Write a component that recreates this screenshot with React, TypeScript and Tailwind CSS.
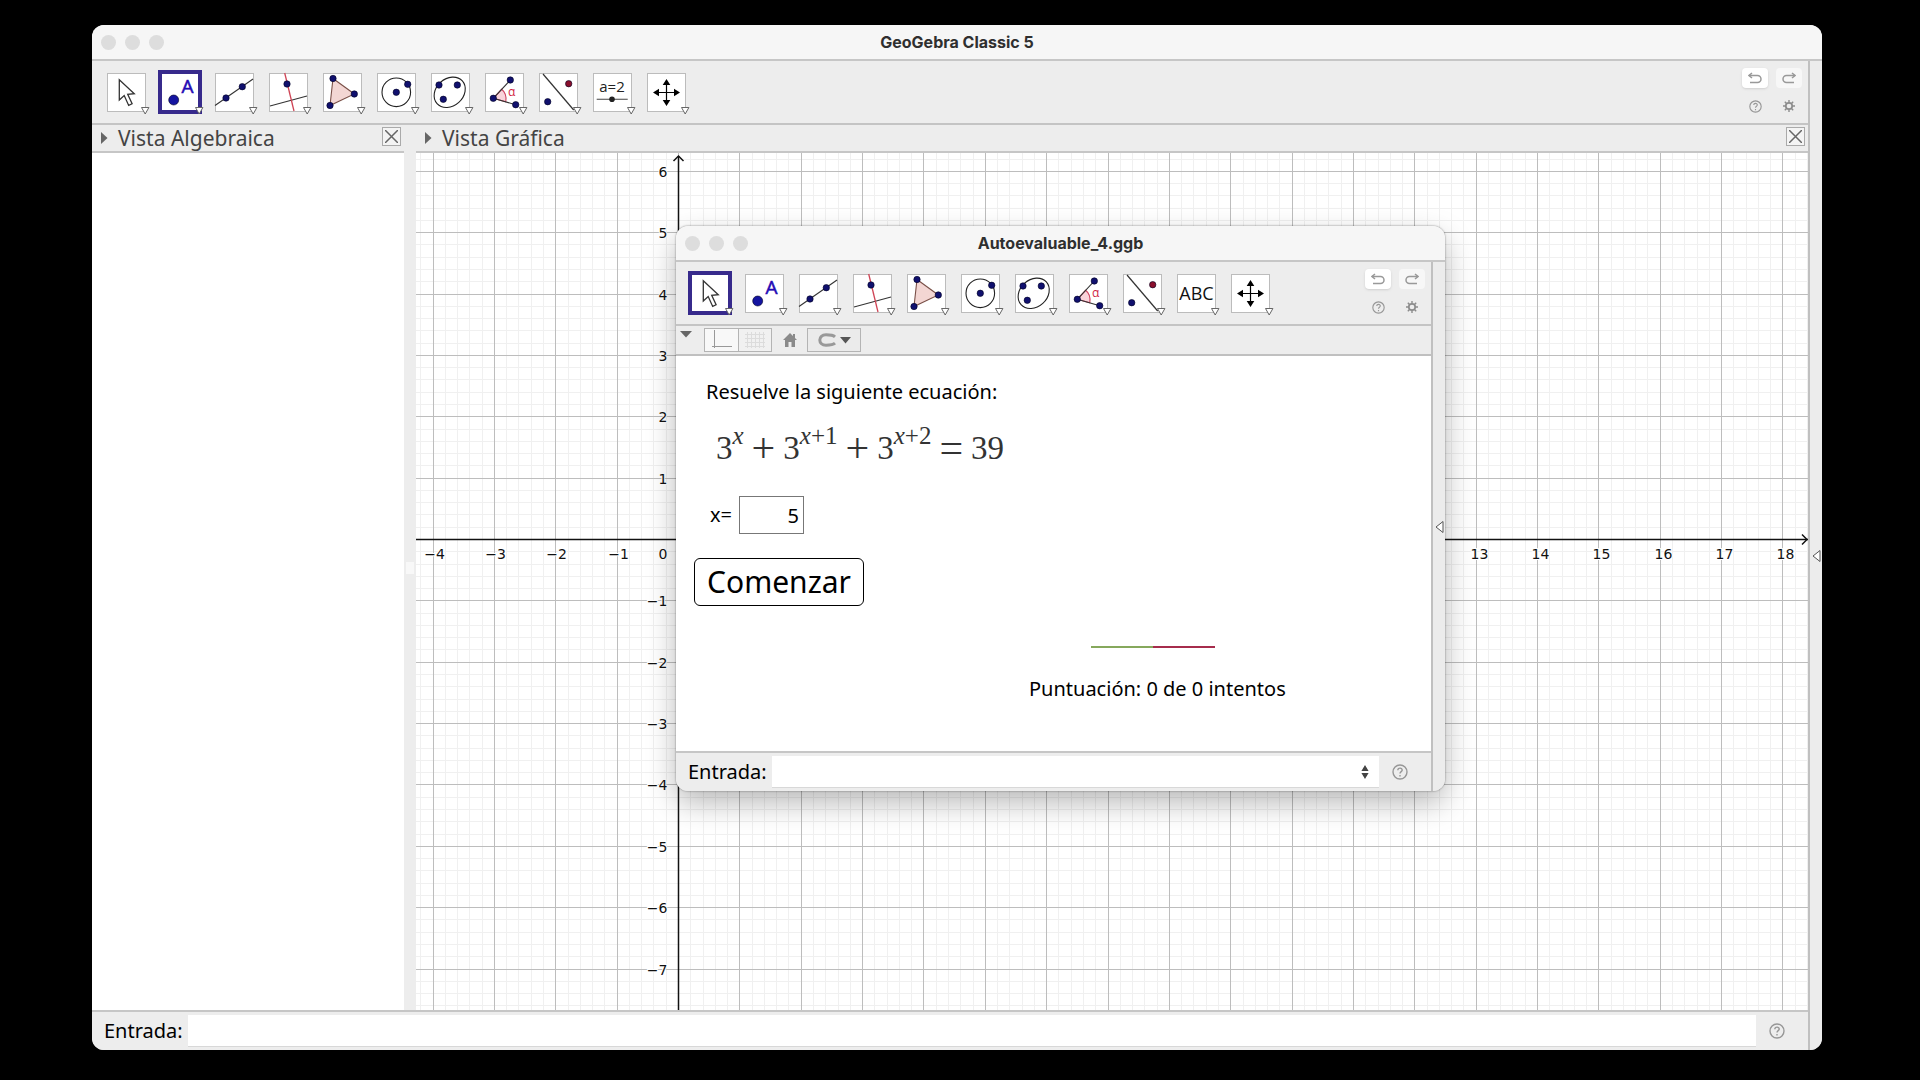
import type { ReactNode } from "react";

const UNIT = 61.36;
const ORIGIN_X = 262;
const ORIGIN_Y = 386;
const NAVY = "#10106e";

const range = (from: number, to: number) =>
  Array.from({ length: to - from + 1 }, (_, i) => from + i);

const label = (v: number) => String(v).replace("-", "−");

function Dot({ x, y, r = 3.2, fill = NAVY }: { x: number; y: number; r?: number; fill?: string }) {
  return <circle cx={x} cy={y} r={r} fill={fill} stroke="#000022" strokeWidth="0.6" />;
}

const toolIcons: Record<string, ReactNode> = {
  Mueve: (
    <path
      d="M12.3 6.7V27l4.9-4.4 4.5 9.8 3.4-1.6-4.4-9.4 6.6-.7z"
      fill="#fff"
      stroke="#333"
      strokeWidth="1.3"
    />
  ),
  Punto: (
    <>
      <Dot x={12.7} y={27} r={5} fill="#1414a0" />
      <text x="26.5" y="19.5" textAnchor="middle" fontSize="19" fill="#2409b5" stroke="#2409b5" strokeWidth="0.5">
        A
      </text>
    </>
  ),
  Recta: (
    <>
      <path d="M0 32.5 38 6" stroke="#333" strokeWidth="1.1" />
      <Dot x={11} y={25} />
      <Dot x={27.3} y={13.7} />
    </>
  ),
  Perpendicular: (
    <>
      <path d="M1 33 38 23" stroke="#333" strokeWidth="1.1" />
      <path d="m15.7 0 9.3 38" stroke="#cf4455" strokeWidth="1.3" />
      <Dot x={18} y={11} />
    </>
  ),
  Polígono: (
    <>
      <path d="M10 5.5 31.3 21 7 32.5z" fill="#f3d6d3" stroke="#7a5048" strokeWidth="1.1" />
      <Dot x={10} y={5.5} />
      <Dot x={31.3} y={21} />
      <Dot x={7} y={32.5} />
    </>
  ),
  Circunferencia: (
    <>
      <circle cx="19.3" cy="19.3" r="14.3" fill="none" stroke="#222" strokeWidth="1.1" />
      <Dot x={19.3} y={19.3} />
      <Dot x={30.7} y={11.3} />
    </>
  ),
  Elipse: (
    <>
      <ellipse
        cx="18.7"
        cy="19.3"
        rx="17"
        ry="13.6"
        transform="rotate(-42 18.7 19.3)"
        fill="none"
        stroke="#222"
        strokeWidth="1.1"
      />
      <Dot x={8} y={12} />
      <Dot x={26.3} y={12} />
      <Dot x={12.3} y={26.3} />
    </>
  ),
  Ángulo: (
    <>
      <path d="M8.3 25.3 16.6 16.3Q22 20.5 20.8 28.8z" fill="#f9d3da" stroke="#cf4461" strokeWidth="1.1" />
      <path d="M25.3 7 8.3 25.3l22.4 6.4" fill="none" stroke="#333" strokeWidth="1.1" />
      <Dot x={8.3} y={25.3} />
      <Dot x={25.3} y={7} />
      <Dot x={30.7} y={31.7} />
      <text x="26.7" y="23" textAnchor="middle" fontSize="12" fill="#d12344">
        α
      </text>
    </>
  ),
  Simetría: (
    <>
      <path d="m4 1 30.7 36" stroke="#333" strokeWidth="1.2" />
      <Dot x={29.7} y={10.7} fill="#8a0f2c" />
      <Dot x={8.7} y={28.7} />
    </>
  ),
  Deslizador: (
    <>
      <text x="19" y="18.5" textAnchor="middle" fontSize="15" fill="#222">
        a=2
      </text>
      <path d="M3.7 26.3h31" stroke="#444" strokeWidth="1.1" />
      <circle cx="19" cy="26.3" r="2.8" fill="#222" />
    </>
  ),
  Texto: (
    <text x="19.500" y="26" textAnchor="middle" fontSize="18" fill="#111">
      ABC
    </text>
  ),
  "Desplaza Vista Gráfica": (
    <>
      <path d="M19.5 10v19M10 19.5h19" stroke="#000" strokeWidth="1.2" />
      <path
        d="M19.5 6 23.3 12h-7.6zM19.5 33l3.8-6h-7.6zM6 19.5l6-3.8v7.6zM33 19.5l-6-3.8v7.6z"
        fill="#000"
      />
    </>
  ),
};

function ToolButton({ name, selected }: { name: string; selected: boolean }) {
  return (
    <button type="button" aria-label={name} className="flex w-[54px] justify-center">
      <svg width="44" height="44" overflow="visible" fontFamily="'Open Sans','Noto Sans',sans-serif">
        {selected ? (
          <rect x="2" y="2" width="40" height="40" fill="#fff" stroke="#372a8c" strokeWidth="4" />
        ) : (
          <rect x="3.5" y="3.5" width="38" height="38" fill="#fff" stroke="#bcbcbc" />
        )}
        <g transform="translate(3 3)">{toolIcons[name]}</g>
        <path d="M37.500 37.500h7.400L41.200 44z" fill="#fff" stroke="#666" />
      </svg>
    </button>
  );
}

function UndoIcon() {
  return (
    <svg width="14" height="12" viewBox="0 0 14 12" fill="none" stroke="#999" strokeWidth="1.5">
      <path d="M1 3.5h8.500a3.400 3.400 0 0 1 0 7H2" />
      <path d="M4 1 1 3.500 4 6" />
    </svg>
  );
}

function HelpIcon({ size }: { size: number }) {
  return (
    <svg width={size} height={size} viewBox="0 0 16 16" fill="none" stroke="#979797" strokeWidth="1.4">
      <circle cx="8" cy="8" r="7" />
      <path d="M5.800 6.200C6 3.400 10.400 3.600 10.200 6.200 10 7.800 8 7.600 8 9.600M8 11v1.500" />
    </svg>
  );
}

function GearIcon() {
  return (
    <svg width="12" height="12" viewBox="0 0 12 12" fill="none" stroke="#8c8c8c">
      <circle cx="6" cy="6" r="3.2" strokeWidth="1.7" />
      <path
        d="M6 0v2.500M6 9.500v2.500M0 6h2.500M9.500 6H12M1.800 1.800l1.700 1.700M8.500 8.500l1.700 1.700M10.200 1.800 8.500 3.500M3.500 8.500l-1.700 1.700"
        strokeWidth="1.4"
      />
    </svg>
  );
}

function Toolbar({ tools, selected }: { tools: string[]; selected: string }) {
  return (
    <div className="flex h-16 shrink-0 items-center justify-between border-b-2 border-[#c4c4c4] bg-[#ededed] pr-[6px] pl-[7px]">
      <div className="flex">
        {tools.map((t) => (
          <ToolButton key={t} name={t} selected={t === selected} />
        ))}
      </div>
      <div className="grid grid-cols-2 gap-x-2 gap-y-2">
        <button type="button" aria-label="Deshacer" className="flex h-5 w-[26px] items-center justify-center rounded bg-white shadow-sm">
          <UndoIcon />
        </button>
        <button type="button" aria-label="Rehacer" className="flex h-5 w-[26px] -scale-x-100 items-center justify-center rounded bg-[#f7f7f7]">
          <UndoIcon />
        </button>
        <button type="button" aria-label="Ayuda" className="flex h-5 items-center justify-center">
          <HelpIcon size={13} />
        </button>
        <button type="button" aria-label="Preferencias" className="flex h-5 items-center justify-center">
          <GearIcon />
        </button>
      </div>
    </div>
  );
}

function TitleBar({ title }: { title: string }) {
  return (
    <header className="grid h-9 shrink-0 grid-cols-[1fr_auto_1fr] items-center border-b-2 border-[#c6c6c6] bg-[#f6f6f6] px-[9px]">
      <div className="flex gap-[9px]">
        {["Cerrar", "Minimizar", "Ampliar"].map((n) => (
          <button key={n} type="button" aria-label={n} className="size-[15px] rounded-full bg-[#dddddd]" />
        ))}
      </div>
      <h1 className="font-[Inter,sans-serif] text-base leading-5 font-bold text-[#2f2f2f]">{title}</h1>
    </header>
  );
}

function SideStrip() {
  return (
    <button
      type="button"
      aria-label="Mostrar barra lateral"
      className="flex w-[14px] shrink-0 items-center justify-center border-l-2 border-[#c0c0c0] bg-[#ececec]"
    >
      <svg width="9" height="14" viewBox="0 0 9 14">
        <path d="M8 1.500V12.500L1 7z" fill="#fff" stroke="#555" />
      </svg>
    </button>
  );
}

function PanelHeader({ title }: { title: string }) {
  return (
    <div className="flex h-7 shrink-0 items-center justify-between border-b-2 border-[#c6c6c6] bg-[#ededed] pr-[3px] pl-[9px]">
      <div className="flex items-center gap-[10px]">
        <svg width="7" height="12" viewBox="0 0 7 12">
          <path d="M0 0v12l6.500-6z" fill="#666" />
        </svg>
        <h2 className="text-[21px] leading-6 text-[#444]">{title}</h2>
      </div>
      <button type="button" aria-label={`Cerrar ${title}`} className="mb-1 flex size-[19px] items-center justify-center border border-[#aaa] bg-[#f4f4f4]">
        <svg width="13" height="13" viewBox="0 0 13 13" stroke="#666" strokeWidth="1.5">
          <path d="m0 0 13 13M13 0 0 13" />
        </svg>
      </button>
    </div>
  );
}

function InputBar({ id, stepper }: { id: string; stepper?: boolean }) {
  return (
    <div className="flex h-10 shrink-0 items-center border-t-2 border-[#c6c6c6] bg-[#ededed] pl-3">
      <label htmlFor={id} className="w-[84px] text-xl leading-6 text-black">
        Entrada:
      </label>
      <div className="flex h-8 min-w-0 flex-1 items-center border-b border-[#d8d8d8] bg-white pr-[10px]">
        <input id={id} type="text" className="h-full min-w-0 flex-1 px-1 text-xl outline-none" />
        {stepper && (
          <button type="button" aria-label="Historial">
            <svg width="8" height="14" viewBox="0 0 8 14" fill="#444">
              <path d="M4 0l3.600 6H.4zM4 14l3.600-6H.4z" />
            </svg>
          </button>
        )}
      </div>
      <button type="button" aria-label="Ayuda de entrada" className="flex w-[52px] justify-start pl-[13px]">
        <HelpIcon size={16} />
      </button>
    </div>
  );
}

function CoordinatePlane() {
  const px = (v: number) => Math.round(ORIGIN_X + v * UNIT) + 0.5;
  const py = (v: number) => Math.round(ORIGIN_Y - v * UNIT) + 0.5;
  return (
    <div className="min-h-0 flex-1 overflow-hidden bg-white">
      <svg width="100%" height="100%" className="block" fontFamily="'DejaVu Sans',sans-serif" fontSize="14">
        <g stroke="#f0f0f0">
          {range(-25, 200).map((i) => (
            <line key={i} x1={px(i / 5)} x2={px(i / 5)} y1="0" y2="100%" />
          ))}
          {range(-100, 35).map((i) => (
            <line key={i} y1={py(i / 5)} y2={py(i / 5)} x1="0" x2="100%" />
          ))}
        </g>
        <g stroke="#bdbdbd">
          {range(-5, 40).map((i) => (
            <line key={i} x1={px(i)} x2={px(i)} y1="0" y2="100%" />
          ))}
          {range(-20, 7).map((i) => (
            <line key={i} y1={py(i)} y2={py(i)} x1="0" x2="100%" />
          ))}
        </g>
        <g stroke="#111" strokeWidth="1.5" fill="none">
          <line x1={px(0)} x2={px(0)} y1="3" y2="100%" />
          <path d={`M${px(0) - 5} 8 ${px(0)} 3l5 5`} />
          <line x1="0" x2="100%" y1={py(0)} y2={py(0)} />
          <svg x="100%" y={py(0)} overflow="visible">
            <path d="M-6-5-1 0l-5 5" />
          </svg>
        </g>
        <g fill="#111" stroke="#fff" strokeWidth="2" paintOrder="stroke">
          {range(-4, 18)
            .filter((i) => i < 0 || i > 12)
            .map((i) => (
              <text key={i} x={px(i) + (i < 0 ? 1 : 3)} y={py(0) + 19} textAnchor="middle">
                {label(i)}
              </text>
            ))}
          <text x={px(0) - 11} y={py(0) + 19} textAnchor="end">
            0
          </text>
          {range(-7, 6)
            .filter((i) => i !== 0)
            .map((i) => (
              <text key={i} x={px(0) - 11} y={py(i) + 5} textAnchor="end">
                {label(i)}
              </text>
            ))}
        </g>
      </svg>
    </div>
  );
}

function Power({ children }: { children: ReactNode }) {
  return (
    <span className="flex">
      3<sup className="top-0 -mt-3 text-[25px] leading-10">{children}</sup>
    </span>
  );
}

function Equation() {
  return (
    <div className="flex h-10 items-center gap-2 pl-[10px] font-['Liberation_Serif',serif] text-[33px] leading-10 text-[#333]">
      <Power>
        <i>x</i>
      </Power>
      <span className="text-[42px]">+</span>
      <Power>
        <i>x</i>+1
      </Power>
      <span className="text-[42px]">+</span>
      <Power>
        <i>x</i>+2
      </Power>
      <span className="text-[42px]">=</span>
      <span>39</span>
    </div>
  );
}

function StyleBar() {
  return (
    <div className="flex h-[30px] shrink-0 items-center border-b-2 border-[#c0c0c0] bg-[#ededed] pl-1">
      <button type="button" aria-label="Ocultar barra de estilo" className="mr-[12px] mb-3">
        <svg width="12" height="7" viewBox="0 0 12 7">
          <path d="M0 0h12L6 6.500z" fill="#666" />
        </svg>
      </button>
      <button type="button" aria-label="Ejes" className="flex h-6 w-[35px] items-center justify-center border border-[#b4b4b4] bg-[#f8f8f8]">
        <svg width="20" height="20" fill="none" stroke="#999">
          <path d="M2.500 0v18M0 16.500h20" />
        </svg>
      </button>
      <button type="button" aria-label="Cuadrícula" className="flex h-6 w-[33px] items-center justify-center border border-l-0 border-[#b4b4b4] bg-[#f1f1f1]">
        <svg width="20" height="16" fill="none" stroke="#dcdcdc">
          <path d="M2.500 0v16M6.500 0v16M10.500 0v16M14.500 0v16M18.500 0v16M0 2.500h20M0 6.500h20M0 10.500h20M0 14.500h20" />
        </svg>
      </button>
      <button type="button" aria-label="Vista estándar" className="flex h-6 w-[35px] items-center justify-center">
        <svg width="14" height="14" viewBox="0 0 14 14" fill="#8a8a8a">
          <path d="M7 0 0 7h2v7h3.500V9h3v5H12V7h2l-2-2V1h-2v2z" />
        </svg>
      </button>
      <button type="button" aria-label="Atracción a cuadrícula" className="flex h-6 w-[54px] items-center justify-center gap-1 border border-[#b4b4b4] bg-[#ebebeb]">
        <svg width="18" height="14" viewBox="0 0 18 14" fill="none" stroke="#999" strokeWidth="3">
          <path d="M17 3.800C15 2 11 1.800 8 1.800 4 1.800 1.800 4 1.800 7S4 12.200 8 12.200c3 0 7-.2 9-2" />
        </svg>
        <svg width="11" height="7" viewBox="0 0 11 7">
          <path d="M0 0h11L5.500 6.500z" fill="#555" />
        </svg>
      </button>
    </div>
  );
}

function ExerciseWindow() {
  return (
    <section className="absolute top-[226px] left-[676px] flex h-[565px] w-[769px] flex-col overflow-hidden rounded-xl bg-[#ededed] shadow-[0_12px_30px_rgba(0,0,0,0.28),0_0_2px_rgba(0,0,0,0.5)]">
      <TitleBar title="Autoevaluable_4.ggb" />
      <div className="flex min-h-0 flex-1">
        <div className="flex min-w-0 flex-1 flex-col">
          <Toolbar
            selected="Mueve"
            tools={[
              "Mueve", "Punto", "Recta", "Perpendicular", "Polígono", "Circunferencia",
              "Elipse", "Ángulo", "Simetría", "Texto", "Desplaza Vista Gráfica",
            ]}
          />
          <StyleBar />
          <main className="flex min-h-0 flex-1 flex-col items-start bg-white pt-6 pl-[18px] text-xl leading-6 text-black">
            <p className="pl-3">Resuelve la siguiente ecuación:</p>
            <div className="mt-6 pl-3">
              <Equation />
            </div>
            <div className="mt-7 flex items-center pl-4">
              <label htmlFor="answer" className="w-[29px]">
                x=
              </label>
              <input
                id="answer"
                type="text"
                defaultValue="5"
                className="h-[38px] w-[65px] border border-[#777] bg-white pr-1 text-right outline-none"
              />
            </div>
            <button type="button" className="mt-6 h-12 w-[170px] rounded-md border border-black bg-white text-[30px] leading-10">
              Comenzar
            </button>
            <div className="mt-10 ml-[397px] flex h-[2px] w-[124px]">
              <div className="flex-1 bg-[#86a85c]" />
              <div className="flex-1 bg-[#a62c4c]" />
            </div>
            <p className="mt-[29px] pl-[335px]">Puntuación: 0 de 0 intentos</p>
          </main>
          <InputBar id="exercise-input" stepper />
        </div>
        <SideStrip />
      </div>
    </section>
  );
}

export default function App() {
  return (
    <div className="relative flex h-screen overflow-hidden bg-black pt-[25px] pr-[98px] pb-[30px] pl-[92px] font-['Noto_Sans',sans-serif]">
      <section className="flex min-w-0 flex-1 flex-col overflow-hidden rounded-xl bg-[#ededed]">
        <TitleBar title="GeoGebra Classic 5" />
        <div className="flex min-h-0 flex-1">
          <div className="flex min-w-0 flex-1 flex-col">
            <Toolbar
              selected="Punto"
              tools={[
                "Mueve", "Punto", "Recta", "Perpendicular", "Polígono", "Circunferencia",
                "Elipse", "Ángulo", "Simetría", "Deslizador", "Desplaza Vista Gráfica",
              ]}
            />
            <div className="flex min-h-0 flex-1">
              <aside className="flex w-[312px] shrink-0 flex-col bg-white">
                <PanelHeader title="Vista Algebraica" />
              </aside>
              <div className="flex w-3 shrink-0 items-center justify-center bg-[#ededed]">
                <div className="h-3 w-2 bg-[#f8f8f8]" />
              </div>
              <div className="flex min-w-0 flex-1 flex-col">
                <PanelHeader title="Vista Gráfica" />
                <CoordinatePlane />
              </div>
            </div>
            <InputBar id="main-input" />
          </div>
          <SideStrip />
        </div>
      </section>
      <ExerciseWindow />
    </div>
  );
}
